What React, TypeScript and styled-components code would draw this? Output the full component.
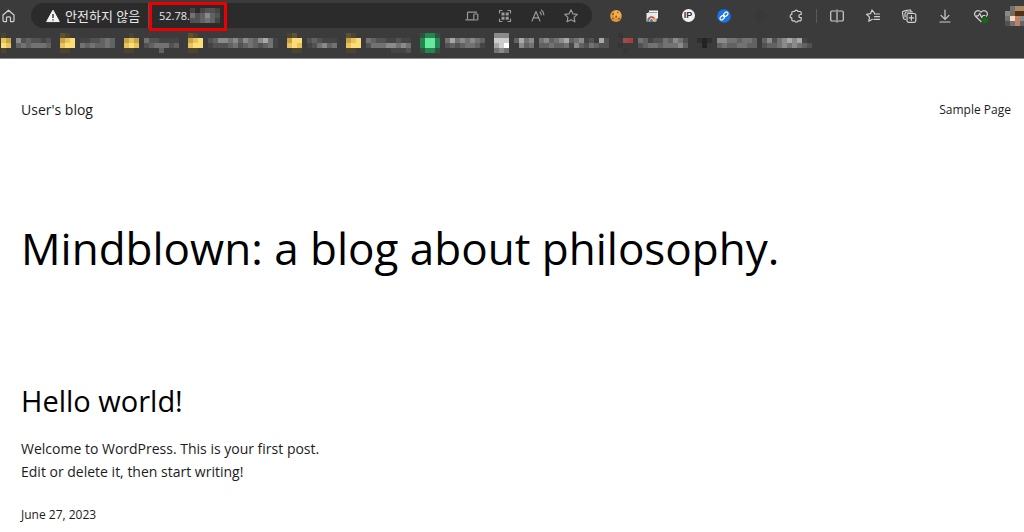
import React from 'react';
import styled, { createGlobalStyle } from 'styled-components';

const GlobalStyle = createGlobalStyle`
  * { box-sizing: border-box; }
  body { margin: 0; background: #fff; overflow: hidden; }
  button, input { font: inherit; color: inherit; border: 0; padding: 0; margin: 0; background: none; }
`;

const Browser = styled.header`
  background: #3b3b3b;
  border-bottom: 1px solid #8c8c8c;
  color: #e8e8e8;
  font: 12px/16px 'Open Sans', 'Noto Sans CJK KR', sans-serif;
  overflow: hidden;
`;

const Toolbar = styled.div`
  display: flex;
  align-items: center;
  height: 31px;
`;

const IconButton = styled.button<{ $width?: number; $color?: string }>`
  flex: none;
  display: flex;
  justify-content: center;
  align-items: center;
  width: ${(p) => p.$width ?? 36}px;
  height: 24px;
  color: ${(p) => p.$color ?? '#d0d0d0'};
`;

const AddressBar = styled.div`
  flex: 1;
  min-width: 0;
  display: flex;
  align-items: center;
  height: 25px;
  margin-left: 14px;
  padding: 0 5px 0 14px;
  border-radius: 13px;
  background: #2b2b2b;
`;

const Security = styled.button`
  display: flex;
  align-items: center;
  gap: 5px;
  width: 103px;
  padding-left: 1px;
  font-size: 13px;
  white-space: nowrap;
`;

const Url = styled.div`
  position: relative;
  display: flex;
  align-items: center;
  height: 25px;
  padding-left: 10px;
  border-left: 1px solid #555;
`;

const UrlInput = styled.input`
  width: 31px;
  outline: 0;
  font-size: 11px;
`;

const Highlight = styled.span`
  position: absolute;
  inset: -1px -7px -3px 0;
  border: 3px solid #ee0000;
  pointer-events: none;
`;

const AddressTools = styled.div`
  display: flex;
  margin-left: auto;
`;

const Actions = styled.div`
  display: flex;
  align-items: center;
  margin: 0 -11px 0 6px;
`;

const Divider = styled.span`
  width: 1px;
  height: 14px;
  margin: 0 2px;
  background: #5a5a5a;
`;

const Bookmarks = styled.nav`
  display: flex;
  align-items: flex-start;
  gap: 9px;
  height: 27px;
  padding: 2px 0 0 1px;
`;

const Bookmark = styled.a`
  flex: none;
  display: flex;
  gap: 5px;
`;

const Page = styled.div`
  padding: 0 13px 0 21px;
  color: #1c1c1c;
  font: 14px/23px 'Open Sans', 'Segoe UI', sans-serif;
  a { color: inherit; text-decoration: none; }
`;

const SiteHeader = styled.div`
  display: flex;
  justify-content: space-between;
  align-items: center;
  padding-top: 39px;
`;

const SiteTitle = styled.a`
  font-size: 14px;
`;

const NavLink = styled.a`
  font-size: 12px;
`;

const Headline = styled.h1`
  margin: 96px 0 0;
  color: #000;
  font-size: 44px;
  font-weight: 400;
  line-height: 62px;
`;

const Post = styled.article`
  padding-top: 102px;
`;

const PostTitle = styled.h2`
  margin: 0;
  color: #000;
  font-size: 29px;
  font-weight: 400;
  line-height: 40px;
`;

const Excerpt = styled.p`
  margin: 16px 0 0;
`;

const PostDate = styled.a`
  display: block;
  margin-top: 20px;
  font-size: 12px;
`;

const palette: Record<string, string> = {
  '0': '#232323', '1': '#2e2e2e', '2': '#363636', a: '#444444', b: '#525252', c: '#626262',
  d: '#727272', e: '#8a8a8a', f: '#a8a8a8', g: '#cccccc', h: '#ffffff',
  y: '#fbdc76', k: '#e6c35c', o: '#c8a343', s: '#4a4431', t: '#5c5235',
  G: '#66e8a0', m: '#23864f', n: '#2a6545', q: '#31503f',
  R: '#a83f3d', r: '#95504d', p: '#7a685a', w: '#f0d9c2', u: '#503018', v: '#bd8265', x: '#a88c68',
};

const Mosaic = ({ rows, cell = 5 }: { rows: string[]; cell?: number }) => {
  const cols = Math.max(...rows.map((r) => r.length));
  return (
    <svg width={cols * cell} height={rows.length * cell} shapeRendering="crispEdges" aria-hidden="true">
      {rows.flatMap((row, y) =>
        [...row].map((c, x) =>
          palette[c] ? (
            <rect key={`${x}-${y}`} x={x * cell} y={y * cell} width={cell} height={cell} fill={palette[c]} />
          ) : null,
        ),
      )}
    </svg>
  );
};

const folder = ['ts.', 'oky', 'kyy', 'ss.'];

const bookmarks = [
  { icon: ['s.', 'ko', 'yk', 's.'], text: ['', 'ebcbbab', 'cdcdddc', ''] },
  { icon: folder, text: ['', 'aabbcdc', 'dcdccdc', ''] },
  { icon: ['.s.', 'oko', 'kyk', 'ss.'], text: ['', 'dbbaaaa', 'bcdddbc', '...c...'] },
  { icon: folder, text: ['', 'bceedecedcefda', 'abbbcdbcdcbcda', ''] },
  { icon: ['st.', 'oyy', 'kyk', '.ss'], text: ['', 'bcbaaa', 'abdecd', ''] },
  { icon: folder, text: ['', 'dcbbaabaa', 'bdddeeded', '.....aaab'] },
  { icon: ['qmmq', 'mGGm', 'mGGm', 'qmmq'], text: ['', 'dfdededc', 'bcbcddca'] },
  { icon: ['eee', 'ggg', 'fgh', 'ded'], text: ['', 'cfde.decdefcdeab.fb', '.ecd.ccdccdaecbdcbb', ''] },
  { icon: ['2..', '.rR', '2..', '.2.'], text: ['', 'dcabbdcedb', 'bcddcdddec', ''] },
  { icon: ['', '101', '.0.', ''], text: ['', 'eeddcddc.cebdefefa.', 'cdccddcc.bccdededcb', ''] },
];

const Line = ({ children, size = 16, width = 1.2 }: { children: React.ReactNode; size?: number; width?: number }) => (
  <svg
    width={size}
    height={size}
    viewBox="0 0 16 16"
    fill="none"
    stroke="currentColor"
    strokeWidth={width}
    strokeLinecap="round"
    strokeLinejoin="round"
    aria-hidden="true"
  >
    {children}
  </svg>
);

const HomeIcon = () => (
  <Line>
    <path d="M2 7 7.500 2.200 13 7v5.600a1 1 0 0 1-1 1H9.500V9.800a1 1 0 0 0-1-1h-2a1 1 0 0 0-1 1v3.800H3a1 1 0 0 1-1-1z" />
  </Line>
);

const WarningIcon = () => (
  <svg width="14" height="14" viewBox="0 0 14 14" aria-hidden="true">
    <path d="M7 1.200 13.300 12.600H.7z" fill="#f4f4f4" stroke="#f4f4f4" strokeLinejoin="round" />
    <path d="M7 5v4M7 10.200v1.400" stroke="#2b2b2b" strokeWidth="1.400" />
  </svg>
);

const DevicesIcon = () => (
  <Line>
    <path d="M3.500 10.500V5a.8.8 0 0 1 .8-.8h8.200M1.800 11.800h7.500" />
    <rect x="9.800" y="6" width="4" height="6" rx=".8" />
  </Line>
);

const QrIcon = () => (
  <Line>
    <path d="M2.500 5V2.500H5M11 2.500h2.500V5M13.500 11v2.500H11M5 13.500H2.500V11" />
    <path d="M4.500 4.500h3v3h-3zM8.700 4.500h3v3h-3zM4.500 8.700h3v3h-3zM8.700 8.700h3v3h-3z" fill="currentColor" stroke="none" />
  </Line>
);

const ReadAloudIcon = () => (
  <Line>
    <path d="M2 13 6 3.500 10 13M3.500 9.800h5M10 4.200c.8.700 1.200 1.600 1.200 2.600M11.500 2.200c1.500 1.200 2.300 2.800 2.300 4.600" />
  </Line>
);

const StarIcon = () => (
  <Line>
    <path d="m8 1.800 1.900 4 4.400.6-3.200 3 .8 4.400L8 11.700l-3.900 2.100.8-4.400-3.200-3 4.400-.6z" />
  </Line>
);

const CookieIcon = () => (
  <svg width="14" height="14" viewBox="0 0 14 14" aria-hidden="true">
    <circle cx="7" cy="7" r="5.900" fill="#dd963c" />
    <circle cx="8" cy="5" r="3.600" fill="#efb357" />
    <circle cx="4.200" cy="5" r=".9" fill="#8a4b16" />
    <circle cx="8.800" cy="3.600" r=".8" fill="#8a4b16" />
    <circle cx="7.200" cy="7.500" r=".9" fill="#8a4b16" />
    <circle cx="4" cy="9.500" r=".8" fill="#8a4b16" />
    <circle cx="10" cy="9.800" r=".9" fill="#8a4b16" />
  </svg>
);

const StoreIcon = () => (
  <svg width="14" height="14" viewBox="0 0 14 14" aria-hidden="true">
    <path d="M4 1.500h9v8H4z" fill="#f4f4f4" />
    <path d="M3 3.500h9" stroke="#999" />
    <path d="M1.500 4h10v8.500h-10z" fill="#e9e9e9" />
    <path d="M3.200 11.500a3.300 3.300 0 0 1 6.600 0" fill="none" stroke="#e04434" strokeWidth="1.800" />
    <path d="M3.200 12.500v-1.200l1.200-1.800" fill="none" stroke="#2f9e4c" strokeWidth="1.500" />
    <path d="M9.800 12.500v-1.200l-.8-1.800" fill="none" stroke="#f5bf2b" strokeWidth="1.500" />
    <circle cx="6.500" cy="11.400" r="1.500" fill="#3c79e6" />
  </svg>
);

const IpBadge = styled.span`
  width: 13px;
  height: 13px;
  border-radius: 50%;
  background: #f2f2f2;
  color: #333;
  font: 700 9px/13px 'Liberation Sans', sans-serif;
  text-align: center;
`;

const LinkIcon = () => (
  <svg width="14" height="14" viewBox="0 0 14 14" fill="none" stroke="#fff" strokeWidth="1.200" aria-hidden="true">
    <circle cx="7" cy="7" r="6.800" fill="#1a73e8" stroke="none" />
    <g transform="rotate(-45 7 7)">
      <rect x="2" y="5.400" width="5.200" height="3.200" rx="1.600" />
      <rect x="6.800" y="5.400" width="5.200" height="3.200" rx="1.600" />
      <path d="M5.500 7h3" />
    </g>
  </svg>
);

const FaintIcon = () => (
  <Line>
    <rect x="4.500" y="3" width="7" height="10" rx="3" />
    <path d="M8 6v4" />
  </Line>
);

const PuzzleIcon = () => (
  <Line>
    <path d="M5 3.500h1.700a1.700 1.700 0 0 1 3.300 0h2a1.200 1.200 0 0 1 1.200 1.200v1.800h-.8a1.600 1.600 0 0 0 0 3.200h.8v2a1.200 1.200 0 0 1-1.200 1.200H10a1.700 1.700 0 0 1-3.300 0H5a1.200 1.200 0 0 1-1.200-1.200v-1.800a1.700 1.700 0 0 1 0-3.400V4.700A1.200 1.200 0 0 1 5 3.500z" />
  </Line>
);

const SplitIcon = () => (
  <Line>
    <path d="M6.500 3H3a1.300 1.300 0 0 0-1.300 1.300v7.400A1.300 1.300 0 0 0 3 13h3.500M9.500 3H13a1.300 1.300 0 0 1 1.300 1.300v7.400A1.300 1.300 0 0 1 13 13H9.500M8 1.800v12.400" />
  </Line>
);

const FavoritesIcon = () => (
  <Line>
    <path d="M9.500 5.200 7 2 5.500 5.700l-4 .6 3 2.800-.7 4.200 3.600-2M9.500 6h5M9.500 8.700h5M9 11.400h5.500" />
  </Line>
);

const CollectionsIcon = () => (
  <Line>
    <rect x="6" y="5.500" width="8.800" height="8.800" rx="1.500" />
    <path d="M10.400 7.600v4.600M8.100 9.900h4.600M4.500 11.500l-1-.3A1.500 1.500 0 0 1 2.300 9.600L1.500 4.800a1.500 1.500 0 0 1 1.200-1.700l5.500-1.200a1.500 1.500 0 0 1 1.800 1v.8M4 9V6a2 2 0 0 1 2-2h5.500" />
  </Line>
);

const DownloadIcon = () => (
  <Line>
    <path d="M8 2v9M4 7.300l4 4 4-4M3 14h10" />
  </Line>
);

const HealthIcon = () => (
  <Line>
    <path d="M8 13.500 2.500 8.200C-.2 5 4.300.2 8 4.200c3.700-4 8.200.8 5.500 4M3.500 7.800h1.800L6.700 5.500l2 4 1.300-2h2" />
    <circle cx="12" cy="12.200" r="3" fill="#0f6b14" stroke="none" />
  </Line>
);

const AddressTool = ({ label, children }: { label: string; children: React.ReactNode }) => (
  <IconButton type="button" aria-label={label} $width={33} $color="#9a9a9a">
    {children}
  </IconButton>
);

const Action = ({ label, color, children }: { label: string; color?: string; children: React.ReactNode }) => (
  <IconButton type="button" aria-label={label} $color={color}>
    {children}
  </IconButton>
);

export default function App() {
  return (
    <>
      <GlobalStyle />
      <Browser>
        <Toolbar>
          <IconButton type="button" aria-label="Home" $width={17}><HomeIcon /></IconButton>
          <AddressBar>
            <Security type="button"><WarningIcon />안전하지 않음</Security>
            <Url>
              <UrlInput aria-label="Address" defaultValue="52.78." />
              <Mosaic rows={['a.abba', 'dbcecb', 'bbcdca']} />
              <Highlight />
            </Url>
            <AddressTools>
              <AddressTool label="Devices"><DevicesIcon /></AddressTool>
              <AddressTool label="QR code"><QrIcon /></AddressTool>
              <AddressTool label="Read aloud"><ReadAloudIcon /></AddressTool>
              <AddressTool label="Add to favorites"><StarIcon /></AddressTool>
            </AddressTools>
          </AddressBar>
          <Actions>
            <Action label="Cookies"><CookieIcon /></Action>
            <Action label="Web store"><StoreIcon /></Action>
            <Action label="IP address"><IpBadge>IP</IpBadge></Action>
            <Action label="Copy link"><LinkIcon /></Action>
            <Action label="Extension" color="#353535"><FaintIcon /></Action>
            <Action label="Extensions"><PuzzleIcon /></Action>
            <Divider />
            <Action label="Split screen"><SplitIcon /></Action>
            <Action label="Favorites"><FavoritesIcon /></Action>
            <Action label="Collections"><CollectionsIcon /></Action>
            <Action label="Downloads"><DownloadIcon /></Action>
            <Action label="Browser essentials"><HealthIcon /></Action>
            <Action label="Profile"><Mosaic rows={['.dxxx', 'epuux', 'dwvee', 'bdvc1']} /></Action>
          </Actions>
        </Toolbar>
        <Bookmarks aria-label="Bookmarks">
          {bookmarks.map((b, i) => (
            <Bookmark key={i} href="#" aria-label={`Bookmark ${i + 1}`}>
              <Mosaic rows={b.icon} />
              <Mosaic rows={b.text} />
            </Bookmark>
          ))}
        </Bookmarks>
      </Browser>
      <Page>
        <SiteHeader>
          <SiteTitle href="#">User's blog</SiteTitle>
          <NavLink href="#">Sample Page</NavLink>
        </SiteHeader>
        <main>
          <Headline>Mindblown: a blog about philosophy.</Headline>
          <Post>
            <PostTitle><a href="#">Hello world!</a></PostTitle>
            <Excerpt>
              Welcome to WordPress. This is your first post.
              <br />
              Edit or delete it, then start writing!
            </Excerpt>
            <PostDate href="#">June 27, 2023</PostDate>
          </Post>
        </main>
      </Page>
    </>
  );
}
